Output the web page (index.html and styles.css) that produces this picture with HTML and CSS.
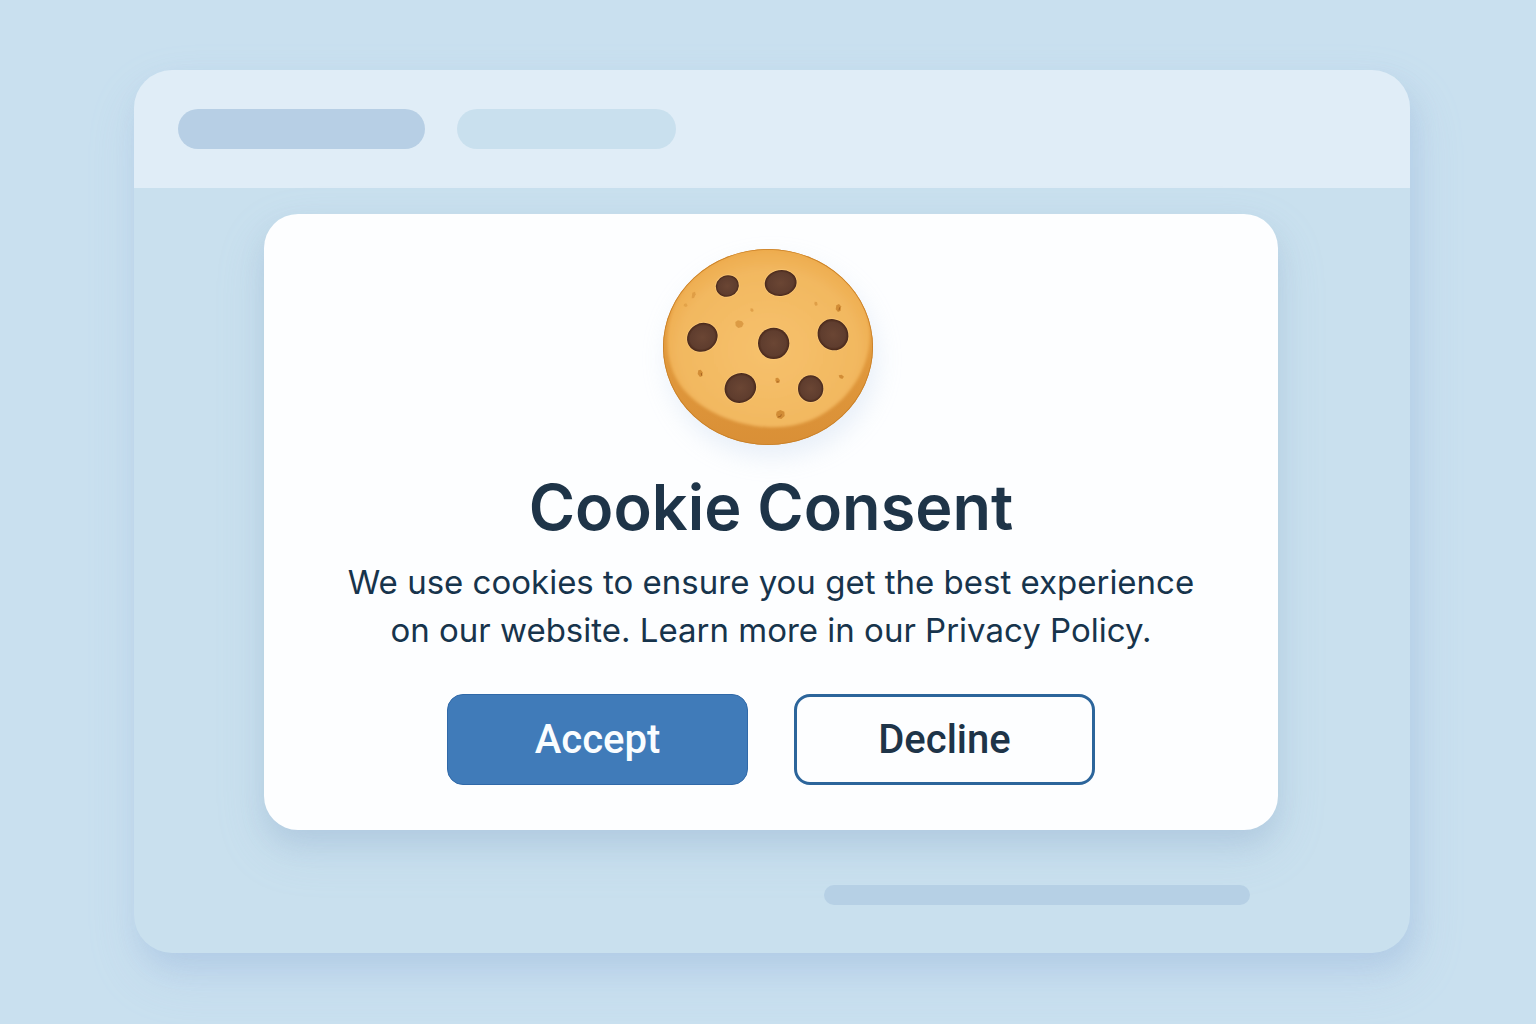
FILE: index.html
```html
<!DOCTYPE html>
<html lang="en">
<head>
<meta charset="utf-8">
<meta name="viewport" content="width=device-width, initial-scale=1">
<title>Cookie Consent</title>
<link rel="stylesheet" href="styles.css">
</head>
<body>
<main class="window">
  <header class="window-header">
    <span class="tab tab-active"></span>
    <span class="tab"></span>
  </header>
  <div class="window-body">
    <section class="dialog" role="dialog" aria-labelledby="consent-title" aria-describedby="consent-text">
      <svg class="cookie" viewBox="70 57 630 588" aria-hidden="true">
        <defs>
          <linearGradient id="rim" x1="0" y1="0" x2="0" y2="1">
            <stop offset="0" stop-color="#eda94a"/>
            <stop offset="0.6" stop-color="#e0983c"/>
            <stop offset="1" stop-color="#d98f36"/>
          </linearGradient>
          <radialGradient id="face" cx="50%" cy="56%" r="58%">
            <stop offset="0" stop-color="#f6c16c"/>
            <stop offset="0.75" stop-color="#f2b860"/>
            <stop offset="1" stop-color="#edaa4b"/>
          </radialGradient>
          <radialGradient id="chip">
            <stop offset="0" stop-color="#6b4634"/>
            <stop offset="0.8" stop-color="#5f3d2e"/>
            <stop offset="1" stop-color="#482719"/>
          </radialGradient>
          <clipPath id="edge"><ellipse cx="385" cy="351" rx="315" ry="294"/></clipPath>
          <filter id="soft"><feGaussianBlur stdDeviation="4"/></filter>
        </defs>
        <g clip-path="url(#edge)">
          <path fill="url(#rim)" d="M60 50h650v605H60z"/>
          <path fill="url(#face)" filter="url(#soft)" d="M385 60C545 58 676 158 689 290C698 369 665 450 608 507C546 568 470 596 383 591C286 586 186 543 130 476C87 423 72 342 92 266C125 143 244 62 385 60Z"/>
          <ellipse fill="none" stroke="#c98028" stroke-width="5" cx="385" cy="351" rx="315" ry="294"/>
        </g>
        <g fill="url(#chip)" stroke="#ffd084" stroke-opacity=".55" stroke-width="5" paint-order="stroke">
          <ellipse cx="263" cy="168" rx="35" ry="32" transform="rotate(-20 263 168)"/>
          <ellipse cx="423" cy="159" rx="48" ry="39" transform="rotate(-9 423 159)"/>
          <ellipse cx="188" cy="322" rx="47" ry="42" transform="rotate(-30 188 322)"/>
          <ellipse cx="402" cy="340" rx="47" ry="47"/>
          <ellipse cx="580" cy="314" rx="45" ry="48" transform="rotate(-40 580 314)"/>
          <ellipse cx="302" cy="474" rx="48" ry="44" transform="rotate(-25 302 474)"/>
          <ellipse cx="513" cy="476" rx="38" ry="40"/>
        </g>
        <g fill="#d28d36">
          <path opacity=".7" d="M287 276l8-5 12 3 5 7-5 10-11 3-8-7z"/>
          <path d="M590 226l8-4 6 7-1 13-8 4-7-8z"/>
          <path opacity=".6" d="M525 215l7 1 2 9-6 3-4-6z"/>
          <path opacity=".6" d="M333 235l7 1 2 7-5 3-5-4z"/>
          <path opacity=".55" d="M158 188l8-3 2 8-5 11-7 1z"/>
          <path opacity=".45" d="M133 222l7-2 4 7-5 4-7-3z"/>
          <path d="M176 421l7-2 6 8-1 11-7 3-7-9z"/>
          <path d="M408 444l7-1 6 8-2 7-8 1-4-7z"/>
          <path d="M597 436l9-2 7 6-5 7-8-3z"/>
          <path d="M411 545l11-5 12 5 1 13-10 9-12-3-4-10z"/>
        </g>
        <g fill="none" stroke="#a86420" stroke-width="3">
          <path d="M600 232l-2 9M185 429l1 8M411 456l6-1M415 561l8-2 2-6"/>
        </g>
      </svg>
      <h1 class="title" id="consent-title">Cookie Consent</h1>
      <p class="message" id="consent-text">We use cookies to ensure you get the best experience on our website. Learn more in our <a class="policy" href="#privacy">Privacy Policy.</a></p>
      <div class="actions">
        <button class="button button-primary" type="button">Accept</button>
        <button class="button" type="button">Decline</button>
      </div>
    </section>
    <div class="footer-line"></div>
  </div>
</main>
</body>
</html>
```
FILE: styles.css
```css
* {
  box-sizing: border-box;
}

body {
  margin: 0;
  min-height: 100vh;
  padding: 70px 126px 71px 134px;
  display: flex;
  background: #c9e0ef;
  color: #17344c;
  font-family: Inter, "Liberation Sans", sans-serif;
}

.window {
  flex: 1;
  display: flex;
  flex-direction: column;
  border-radius: 38px;
  background: #c9e0ee;
  box-shadow: 6px 14px 24px rgba(130, 165, 205, 0.2), 4px 24px 50px rgba(160, 185, 230, 0.24);
}

.window-header {
  display: flex;
  gap: 32px;
  padding: 39px 44px;
  border-radius: 38px 38px 0 0;
  background: #e0edf7;
}

.tab {
  width: 219px;
  height: 40px;
  border-radius: 20px;
  background: #c9e0ee;
}

.tab-active {
  width: 247px;
  background: #b7cfe5;
}

.window-body {
  flex: 1;
  display: flex;
  flex-direction: column;
  padding: 26px 132px 48px 130px;
}

.dialog {
  display: flex;
  flex-direction: column;
  align-items: center;
  padding: 35px 64px 45px;
  border-radius: 34px;
  background: #fdfeff;
  box-shadow: 0 14px 24px rgba(120, 150, 185, 0.18), 0 20px 48px rgba(150, 180, 220, 0.22);
}

.cookie {
  width: 210px;
  height: 196px;
  margin-right: 6px;
  filter: drop-shadow(4px 12px 12px rgba(160, 185, 225, 0.22));
}

.title {
  margin: 22px 0 0;
  font-size: 63px;
  font-weight: 600;
  line-height: 80px;
  color: #1e3448;
}

.message {
  max-width: 860px;
  margin: 11px 0 0;
  font-size: 33px;
  line-height: 48px;
  text-align: center;
}

.policy {
  color: inherit;
  text-decoration: none;
}

.actions {
  display: flex;
  flex-wrap: wrap;
  gap: 46px;
  margin-top: 40px;
}

.button {
  width: 301px;
  height: 91px;
  border: 3px solid #2c659b;
  border-radius: 16px;
  background: #fdfeff;
  color: #1e3448;
  font: 500 40px Roboto, "Liberation Sans", sans-serif;
}

.button-primary {
  border: 1px solid #3069a8;
  background: #407bb9;
  color: #fafdff;
}

.footer-line {
  align-self: flex-end;
  width: 426px;
  height: 20px;
  margin: 55px 28px 0 0;
  border-radius: 10px;
  background: #b6d0e5;
}
```
